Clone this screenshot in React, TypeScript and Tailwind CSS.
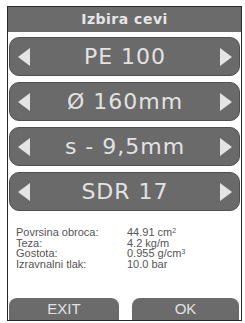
import React from "react";

const rows = ["PE 100", "Ø 160mm", "s - 9,5mm", "SDR 17"];

const info: [string, React.ReactNode][] = [
  ["Povrsina obroca:", <>44.91 cm<sup className="text-[7px]">2</sup></>],
  ["Teza:", "4.2 kg/m"],
  ["Gostota:", <>0.955 g/cm<sup className="text-[7px]">3</sup></>],
  ["Izravnalni tlak:", "10.0 bar"],
];

function Arrow({ dir }: { dir: "left" | "right" }) {
  return (
    <svg width="14" height="20" viewBox="0 0 14 20" className="shrink-0">
      {dir === "left" ? (
        <polygon points="13,1 13,19 1,10" fill="#e4e4e4" />
      ) : (
        <polygon points="1,1 1,19 13,10" fill="#e4e4e4" />
      )}
    </svg>
  );
}

function SelectRow({ label }: { label: string }) {
  return (
    <div className="flex h-[39px] items-center justify-between rounded-[10px] border border-[#505050] bg-[#6a6a6a] pl-[7px] pr-[6px]">
      <Arrow dir="left" />
      <span className="text-[22px] tracking-[1px] text-[#e2e2e2] [font-family:'DejaVu_Sans',sans-serif]">
        {label}
      </span>
      <Arrow dir="right" />
    </div>
  );
}

export default function App() {
  return (
    <div className="h-[323px] w-[245px] bg-white pl-[7px] pt-[6px]">
      <div className="flex h-[315px] w-[235px] flex-col border-[1.5px] border-[#2a2a2a] bg-white">
        {/* Header */}
        <div className="flex h-[25px] items-center justify-center bg-[#6b6b6b] text-[14px] font-bold tracking-[0.5px] text-[#e6e6e6] [font-family:'DejaVu_Sans',sans-serif]">
          Izbira cevi
        </div>

        {/* Selectors */}
        <div className="mt-[5px] flex flex-col gap-[6px] pl-[1px] pr-[1px]">
          {rows.map((r) => (
            <SelectRow key={r} label={r} />
          ))}
        </div>

        {/* Info */}
        <div className="mt-[16px] grid grid-cols-[111px_1fr] pl-[8px] text-[11px] leading-[10.5px] text-[#555] [font-family:'Liberation_Sans',sans-serif]">
          {info.map(([k, v]) => (
            <React.Fragment key={k}>
              <span>{k}</span>
              <span>{v}</span>
            </React.Fragment>
          ))}
        </div>

        {/* Buttons */}
        <div className="mt-auto flex justify-between pl-[1px] pr-[2px]">
          <div className="flex h-[22px] w-[110px] items-center justify-center rounded-t-[8px] bg-[#6b6b6b] text-[15px] text-[#e2e2e2] [font-family:'Liberation_Sans',sans-serif]">
            EXIT
          </div>
          <div className="flex h-[22px] w-[107px] items-center justify-center rounded-t-[8px] bg-[#6b6b6b] text-[15px] text-[#e2e2e2] [font-family:'Liberation_Sans',sans-serif]">
            OK
          </div>
        </div>
      </div>
    </div>
  );
}
